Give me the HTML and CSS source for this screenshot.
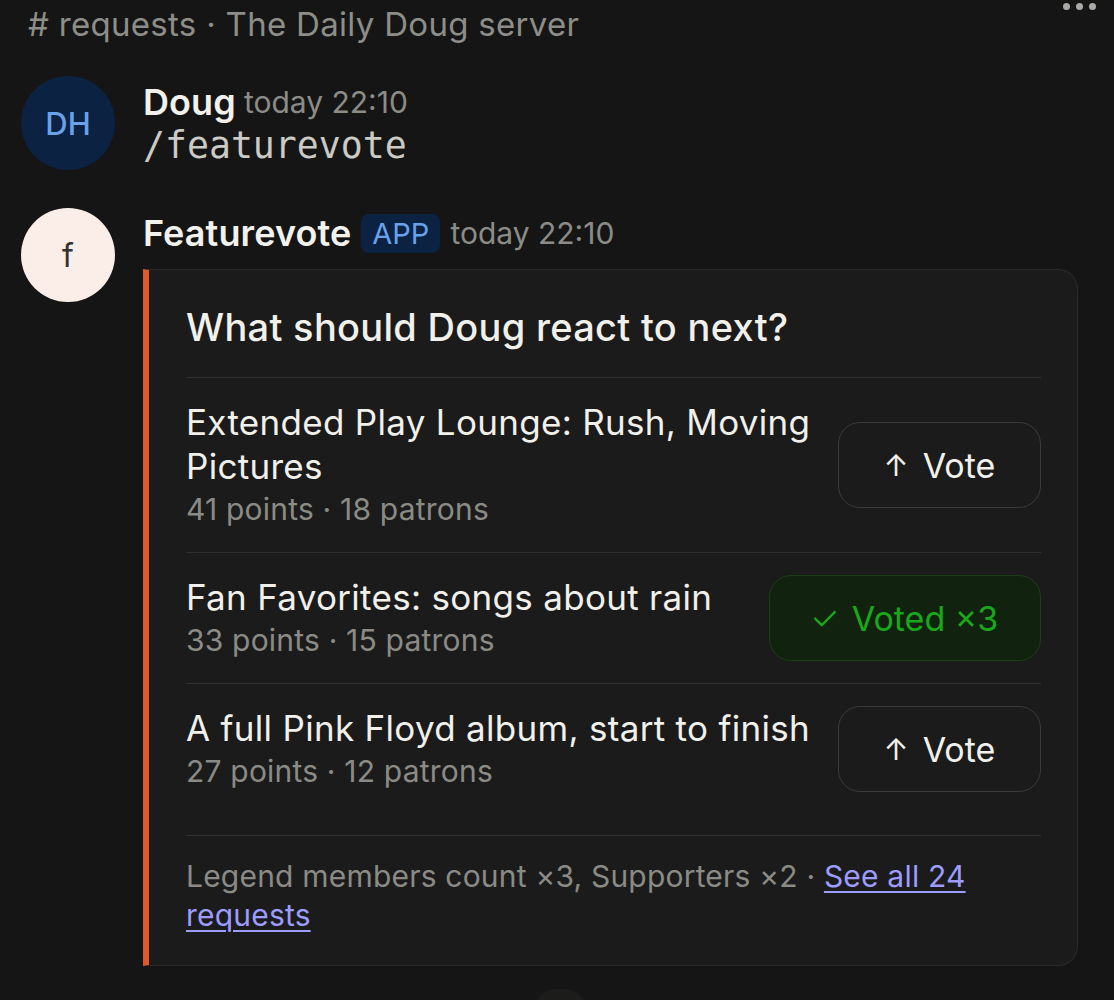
FILE: index.html
```html
<!DOCTYPE html>
<html lang="en">
<head>
<meta charset="utf-8">
<title>requests · The Daily Doug server</title>
<link rel="stylesheet" href="styles.css">
</head>
<body>
<div class="page">
  <header class="topbar">
    <span class="channel"># requests · The Daily Doug server</span>
    <button class="more" aria-label="More"><span></span><span></span><span></span></button>
  </header>

  <div class="messages">
    <div class="msg msg-user">
      <div class="avatar avatar-dh">DH</div>
      <div class="msg-body">
        <div class="msg-head"><span class="name">Doug</span><span class="time">today 22:10</span></div>
        <div class="command">/featurevote</div>
      </div>
    </div>

    <div class="msg msg-app">
      <div class="avatar avatar-f">f</div>
      <div class="msg-body">
        <div class="msg-head app-head"><span class="name">Featurevote</span><span class="badge">APP</span><span class="time">today 22:10</span></div>
        <div class="card">
          <h2 class="card-title">What should Doug react to next?</h2>
          <div class="row">
            <div class="row-text">
              <div class="row-title">Extended Play Lounge: Rush, Moving Pictures</div>
              <div class="row-meta">41 points · 18 patrons</div>
            </div>
            <button class="vote"><span class="arrow">↑</span>Vote</button>
          </div>
          <div class="row">
            <div class="row-text">
              <div class="row-title">Fan Favorites: songs about rain</div>
              <div class="row-meta">33 points · 15 patrons</div>
            </div>
            <button class="vote voted"><svg class="check" viewBox="0 0 24 24" width="24" height="24"><path d="M3 12.5 L9 18.5 L21 6.5" fill="none" stroke="currentColor" stroke-width="2.2" stroke-linecap="round" stroke-linejoin="round"/></svg>Voted ×3</button>
          </div>
          <div class="row row-last">
            <div class="row-text">
              <div class="row-title">A full Pink Floyd album, start to finish</div>
              <div class="row-meta">27 points · 12 patrons</div>
            </div>
            <button class="vote"><span class="arrow">↑</span>Vote</button>
          </div>
          <div class="card-foot">Legend members count ×3, Supporters ×2 · <a href="#" class="link">See all 24 requests</a></div>
        </div>
      </div>
    </div>
  </div>
  <div class="scroll-pill"></div>
</div>
</body>
</html>
```

FILE: styles.css
```css
* { box-sizing: border-box; }
html, body { margin: 0; padding: 0; }
body {
  background: #151515;
  color: #f1f0ea;
  font-family: Inter, "Noto Sans", sans-serif;
  width: 1114px;
  height: 1000px;
  overflow: hidden;
}
.page { position: relative; height: 1000px; }

.topbar {
  display: flex;
  align-items: center;
  height: 50px;
  padding: 0 0 0 28px;
}
.channel {
  font-size: 33px;
  color: #8e8e89;
  letter-spacing: 0.3px;
  margin-top: -2px;
}
.more {
  position: absolute;
  top: 3px;
  right: 18px;
  display: flex;
  gap: 6px;
  background: none;
  border: 0;
  padding: 0;
}
.more span {
  width: 7px; height: 7px; border-radius: 50%;
  background: #a9a9a6;
  display: block;
}

.messages { padding: 26px 36px 0 21px; }
.msg { display: flex; gap: 28px; }
.avatar {
  width: 94px; height: 94px; border-radius: 50%;
  flex: none;
  display: flex; align-items: center; justify-content: center;
}
.avatar-dh { background: #0b2242; color: #69a1ea; font-size: 31px; font-weight: 500; }
.avatar-f { background: #fbeee8; color: #333; font-size: 32px; }
.msg-body { flex: 1; min-width: 0; }
.msg-head { display: flex; align-items: center; gap: 10px; height: 50px; }
.name { font-size: 36px; font-weight: 600; letter-spacing: 0.1px; color: #f2f1ec; }
.time { font-size: 30px; color: #8c8c87; letter-spacing: 0; }
.msg-user .msg-head { height: 44px; margin-top: 4px; }
.msg-user .name { margin-right: -2px; }
.command {
  font-family: "DejaVu Sans Mono", monospace;
  font-size: 36.5px;
  color: #cbcac4;
  line-height: 44px;
}
.msg-app { margin-top: 38px; }
.badge {
  background: #0b2242; color: #69a1ea;
  font-size: 29px;
  border-radius: 8px;
  padding: 0 11px;
  height: 39px; line-height: 39px;
}

.card {
  margin-top: 11px;
  background: #1b1b1b;
  border: 1px solid #2b2b2b;
  border-left: 6px solid #de5a2c;
  border-radius: 0 20px 20px 0;
  padding: 34px 36px 30px 37px;
}
.card-title {
  margin: 0;
  font-size: 38px;
  font-weight: 500;
  line-height: 46px;
  letter-spacing: 0.3px;
  padding-bottom: 27px;
  border-bottom: 1px solid #2f2f2f;
}
.row {
  display: flex; align-items: center; gap: 16px;
  padding: 22px 0;
  border-bottom: 1px solid #2f2f2f;
}
.row-last { border-bottom: 0; }
.row-text { flex: 1; min-width: 0; }
.row-title { font-size: 35px; line-height: 44px; letter-spacing: 0.3px; color: #f1f0ea; }
.row-meta { font-size: 30px; line-height: 42px; letter-spacing: 0.2px; color: #8b8b86; }
.vote {
  flex: none;
  width: 203px; height: 86px;
  border-radius: 22px;
  border: 1px solid #3b3b3b;
  background: #1b1b1b;
  color: #f1f0ea;
  font-family: inherit;
  font-size: 34px;
  letter-spacing: 0;
  display: flex; align-items: center; justify-content: center; gap: 14px;
  padding: 0;
}
.arrow { font-size: 30px; }
.voted {
  width: 272px;
  background: #11230f;
  border-color: #1d3d18;
  color: #1aa71b;
}
.check { width: 26px; height: 26px; }
.card-foot {
  margin-top: 21px;
  border-top: 1px solid #2f2f2f;
  padding-top: 21px;
  font-size: 30px;
  line-height: 39px;
  color: #8b8b86;
  letter-spacing: 0.2px;
}
.link { color: #9d9cff; text-decoration: underline; text-underline-offset: 4px; text-decoration-thickness: 2px; }

.scroll-pill {
  position: absolute;
  left: 535px; top: 989px;
  width: 50px; height: 40px;
  border-radius: 20px;
  background: #1c1c1b;
}
```
